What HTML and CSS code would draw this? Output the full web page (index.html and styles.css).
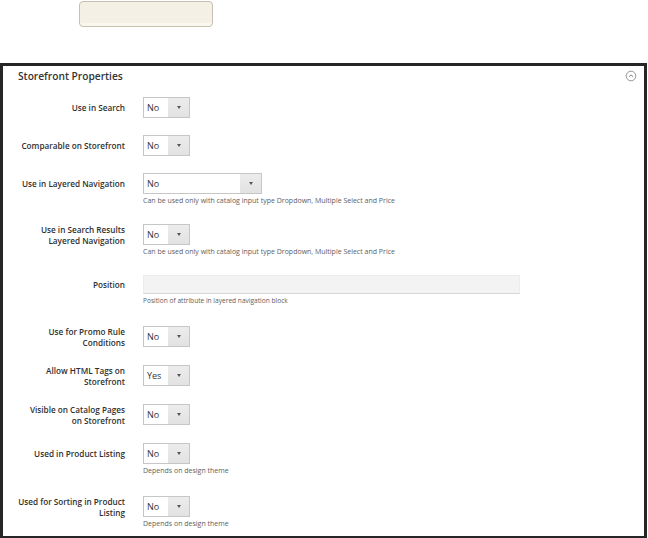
FILE: index.html
```html
<!DOCTYPE html>
<html lang="en">
<head>
  <meta charset="UTF-8">
  <title>Storefront Properties</title>
  <link rel="stylesheet" href="styles.css">
</head>
<body>
  <div class="toolbar">
    <button class="action-button" type="button"></button>
  </div>

  <div class="fieldset">
    <div class="fieldset-header">
      <h2 class="title">Storefront Properties</h2>
      <svg class="collapse" width="12" height="12" viewBox="0 0 12 12">
        <circle cx="6" cy="6" r="4.8" fill="none" stroke="#8c8c8c" stroke-width="0.9"/>
        <path d="M3.9 6.8 L6 4.9 L8.1 6.8" fill="none" stroke="#777" stroke-width="0.9"/>
      </svg>
    </div>

    <div class="field">
      <label class="label">Use in Search</label>
      <div class="control">
        <div class="select"><span class="value">No</span><span class="arrow"></span></div>
      </div>
    </div>

    <div class="field">
      <label class="label">Comparable on Storefront</label>
      <div class="control">
        <div class="select"><span class="value">No</span><span class="arrow"></span></div>
      </div>
    </div>

    <div class="field has-note">
      <label class="label">Use in Layered Navigation</label>
      <div class="control">
        <div class="select wide"><span class="value">No</span><span class="arrow"></span></div>
        <div class="note">Can be used only with catalog input type Dropdown, Multiple Select and Price</div>
      </div>
    </div>

    <div class="field has-note">
      <label class="label">Use in Search Results<br>Layered Navigation</label>
      <div class="control">
        <div class="select"><span class="value">No</span><span class="arrow"></span></div>
        <div class="note">Can be used only with catalog input type Dropdown, Multiple Select and Price</div>
      </div>
    </div>

    <div class="field has-note spaced">
      <label class="label label-short">Position</label>
      <div class="control">
        <div class="input-text"></div>
        <div class="note note-tight">Position of attribute in layered navigation block</div>
      </div>
    </div>

    <div class="field">
      <label class="label">Use for Promo Rule<br>Conditions</label>
      <div class="control">
        <div class="select"><span class="value">No</span><span class="arrow"></span></div>
      </div>
    </div>

    <div class="field">
      <label class="label">Allow HTML Tags on<br>Storefront</label>
      <div class="control">
        <div class="select"><span class="value">Yes</span><span class="arrow"></span></div>
      </div>
    </div>

    <div class="field">
      <label class="label">Visible on Catalog Pages<br>on Storefront</label>
      <div class="control">
        <div class="select"><span class="value">No</span><span class="arrow"></span></div>
      </div>
    </div>

    <div class="field has-note spaced-sm">
      <label class="label">Used in Product Listing</label>
      <div class="control">
        <div class="select"><span class="value">No</span><span class="arrow"></span></div>
        <div class="note">Depends on design theme</div>
      </div>
    </div>

    <div class="field has-note last">
      <label class="label">Used for Sorting in Product<br>Listing</label>
      <div class="control">
        <div class="select"><span class="value">No</span><span class="arrow"></span></div>
        <div class="note">Depends on design theme</div>
      </div>
    </div>
  </div>
</body>
</html>
```

FILE: styles.css
```css
body {
  margin: 0;
  background: #fff;
  font-family: 'Open Sans', 'Noto Sans', sans-serif;
  color: #303030;
}
.toolbar {
  height: 27px;
  padding-top: 1px;
  box-sizing: border-box;
}
.action-button {
  display: block;
  margin-left: 79px;
  width: 134px;
  height: 26px;
  background-color: #f5f0e6;
  border: 1px solid #c9bfae;
  border-radius: 4px;
  box-shadow: inset 0 -3px 0 #faf7f1;
  padding: 0;
}
.fieldset {
  margin-top: 36px;
  width: 647px;
  box-sizing: border-box;
  border: 3px solid #262626;
  padding-bottom: 8px;
}
.fieldset-header {
  display: flex;
  justify-content: space-between;
  align-items: center;
  padding: 3px 7px 0 15px;
  margin-bottom: 14px;
}
.title {
  margin: 0;
  font-size: 10.2px;
  line-height: 14px;
  font-weight: 600;
  color: #333;
}
.collapse {
  display: block;
}
.field {
  display: grid;
  grid-template-columns: 122px auto;
  column-gap: 18px;
  margin-bottom: 17px;
}
.field.has-note {
  margin-bottom: 19px;
}
.field.spaced {
  margin-bottom: 21px;
}
.field.spaced-sm {
  margin-bottom: 21px;
}
.field.last {
  margin-bottom: 0;
}
.label {
  display: flex;
  align-items: center;
  justify-content: flex-end;
  text-align: right;
  min-height: 21px;
  align-self: start;
  font-size: 8.2px;
  line-height: 11px;
  font-weight: 600;
  color: #303030;
}
.label-short {
  min-height: 19px;
}
.select {
  display: flex;
  width: 47px;
  height: 21px;
  box-sizing: border-box;
  border: 1px solid #c6c6c6;
  background: #fff;
}
.select.wide {
  width: 119px;
}
.value {
  flex: 1;
  padding-left: 3px;
  font-size: 9px;
  line-height: 19px;
  color: #333;
}
.arrow {
  position: relative;
  width: 21px;
  background: linear-gradient(#ececec, #e2e2e2);
}
.arrow::after {
  content: '';
  position: absolute;
  left: 9px;
  top: 8px;
  border-left: 2.5px solid transparent;
  border-right: 2.5px solid transparent;
  border-top: 3px solid #555;
}
.input-text {
  width: 377px;
  height: 19px;
  box-sizing: border-box;
  background: #f3f3f3;
  border: 1px solid #ececec;
  border-bottom-color: #d6d6d6;
}
.note {
  margin-top: 2px;
  font-size: 7px;
  line-height: 9px;
  color: #606060;
}
.note-tight {
  font-size: 6.6px;
}
```
